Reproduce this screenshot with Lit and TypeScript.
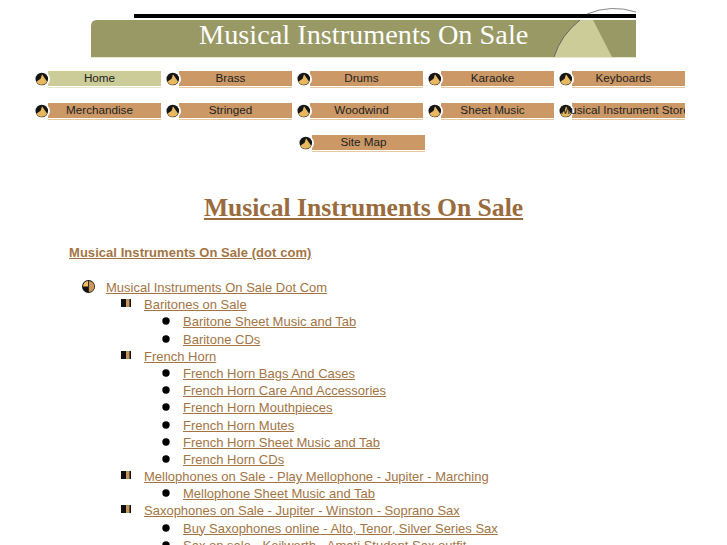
import { LitElement, html, css, svg } from "lit";
import { customElement } from "lit/decorators.js";

type Node = { t: string; c?: Node[] };

const tree: Node[] = [
  {
    t: "Musical Instruments On Sale Dot Com",
    c: [
      { t: "Baritones on Sale", c: [{ t: "Baritone Sheet Music and Tab" }, { t: "Baritone CDs" }] },
      {
        t: "French Horn",
        c: [
          { t: "French Horn Bags And Cases" },
          { t: "French Horn Care And Accessories" },
          { t: "French Horn Mouthpieces" },
          { t: "French Horn Mutes" },
          { t: "French Horn Sheet Music and Tab" },
          { t: "French Horn CDs" },
        ],
      },
      { t: "Mellophones on Sale - Play Mellophone - Jupiter - Marching", c: [{ t: "Mellophone Sheet Music and Tab" }] },
      {
        t: "Saxophones on Sale - Jupiter - Winston - Soprano Sax",
        c: [{ t: "Buy Saxophones online - Alto, Tenor, Silver Series Sax" }, { t: "Sax on sale - Keilwerth - Amati Student Sax outfit" }],
      },
    ],
  },
];

const nav = [
  "Home", "Brass", "Drums", "Karaoke", "Keyboards",
  "Merchandise", "Stringed", "Woodwind", "Sheet Music", "Musical Instrument Store",
  "Site Map",
];

const navIcon = html`<svg class="nav-icon" width="15" height="16" viewBox="0 0 15 16">
  <circle cx="7.5" cy="8" r="7.5" fill="#fff"></circle>
  <circle cx="6.8" cy="8" r="6.3" fill="#151515"></circle>
  <path d="M7 3.2 L12 10.6 A5.7 5.7 0 0 1 1.6 10.4 L5.6 7.8 Z" fill="#e8b860"></path>
</svg>`;

const bullets = [
  svg`<svg width="13" height="13" viewBox="0 0 13 13"><circle cx="6.5" cy="6.5" r="6.5" fill="#111"></circle><path d="M6.8 1A5.5 5.5 0 0 1 6.8 12Z" fill="#c8965a"></path><path d="M6 6.5V1A5.5 5.5 0 0 0 1 6.5Z" fill="#f0c060"></path></svg>`,
  svg`<svg width="10" height="8" viewBox="0 0 10 8"><rect width="10" height="8" fill="#111"></rect><rect x="5" y="0" width="3.5" height="8" fill="#c8965a"></rect></svg>`,
  svg`<svg width="8" height="8" viewBox="0 0 8 8"><circle cx="4" cy="4" r="3.7" fill="#000"></circle></svg>`,
];

@customElement("app-root")
export class AppRoot extends LitElement {
  static styles = css`
    :host {
      display: block;
      height: 545px;
      overflow: hidden;
      background: #fff;
      font-family: "Liberation Sans", Arial, sans-serif;
      font-size: 13px;
      color: #a37545;
    }
    .banner {
      display: block;
      margin: 7px auto 0 91px;
    }
    .nav {
      display: flex;
      flex-wrap: wrap;
      justify-content: center;
      gap: 14px 5px;
      width: 650px;
      margin: 11px 0 0 35px;
    }
    .item {
      position: relative;
      width: 126px;
      height: 18px;
      display: flex;
      justify-content: safe center;
      overflow: hidden;
      font-size: 11.7px;
      line-height: 15px;
      color: #222;
      white-space: nowrap;
    }
    .item:last-child {
      margin-left: 4px;
    }
    .bar {
      position: absolute;
      left: 13px;
      right: 0;
      top: 1px;
      height: 15px;
      background: #cc9966;
      border-bottom: 1px solid #fff;
      box-shadow: 0 1px 0 #e8c8a0;
    }
    .item.active .bar {
      background: #cccc99;
      box-shadow: 0 1px 0 #e6e6cc;
    }
    .label {
      position: relative;
      left: 1.5px;
    }
    .nav-icon {
      position: absolute;
      left: 0;
      top: 1px;
    }
    h1 {
      margin: 40px 0 0;
      text-align: center;
      font: bold 25.6px/32px "Liberation Serif", "Times New Roman", serif;
      color: #996b3d;
      text-decoration: underline;
    }
    .sub {
      margin: 20px 0 0 69px;
      font-weight: bold;
      line-height: 17px;
      letter-spacing: 0.05px;
      text-decoration: underline;
    }
    ul {
      list-style: none;
      margin: 0;
      padding: 0;
    }
    .root {
      margin: 18px 0 0 82px;
    }
    .lv2 {
      padding-left: 38px;
    }
    .lv3 {
      padding-left: 39px;
    }
    .row {
      display: flex;
      height: 17.2px;
      line-height: 17px;
    }
    .b {
      width: 24px;
      flex: none;
      display: flex;
      align-items: flex-start;
    }
    .b svg {
      display: block;
    }
    .b1 svg { margin-top: 1px; }
    .b2 svg { margin: 3px 0 0 1px; }
    .b3 svg { margin: 4px 0 0 3px; }
    a {
      color: #a37545;
      text-decoration: underline;
      white-space: nowrap;
    }
  `;

  private list(nodes: Node[], depth: number): unknown {
    const cls = depth === 0 ? "root" : depth === 1 ? "lv2" : "lv3";
    return html`<ul class=${cls}>
      ${nodes.map(
        (n) => html`<li>
          <div class="row"><span class="b b${depth + 1}">${bullets[depth]}</span><a href="#">${n.t}</a></div>
          ${n.c ? this.list(n.c, depth + 1) : ""}
        </li>`
      )}
    </ul>`;
  }

  render() {
    return html`
      <svg class="banner" width="545" height="52" viewBox="0 0 545 52">
        <rect x="43" y="7" width="502" height="4" fill="#000"></rect>
        <path d="M0 50V19Q0 13 6 13H545V50Z" fill="#999966"></path>
        <path d="M463 50Q470 28 489 13H502L521 50Z" fill="#cccc99"></path>
        <path d="M463 50Q470 28 489 13" fill="none" stroke="#666" stroke-width="1"></path>
        <path d="M496 7Q520 -3 545 5" fill="none" stroke="#888" stroke-width="1"></path>
        <rect x="0" y="50" width="545" height="1" fill="#e6e6cc"></rect>
        <text x="108" y="37" font-family="Liberation Serif" font-size="28.3" fill="#fff">Musical Instruments On Sale</text>
      </svg>
      <div class="nav">
        ${nav.map(
          (n, i) => html`<div class="item ${i === 0 ? "active" : ""}">
            <span class="bar"></span>${navIcon}<span class="label">${n}</span>
          </div>`
        )}
      </div>
      <h1>Musical Instruments On Sale</h1>
      <div class="sub">Musical Instruments On Sale (dot com)</div>
      ${this.list(tree, 0)}
    `;
  }
}
